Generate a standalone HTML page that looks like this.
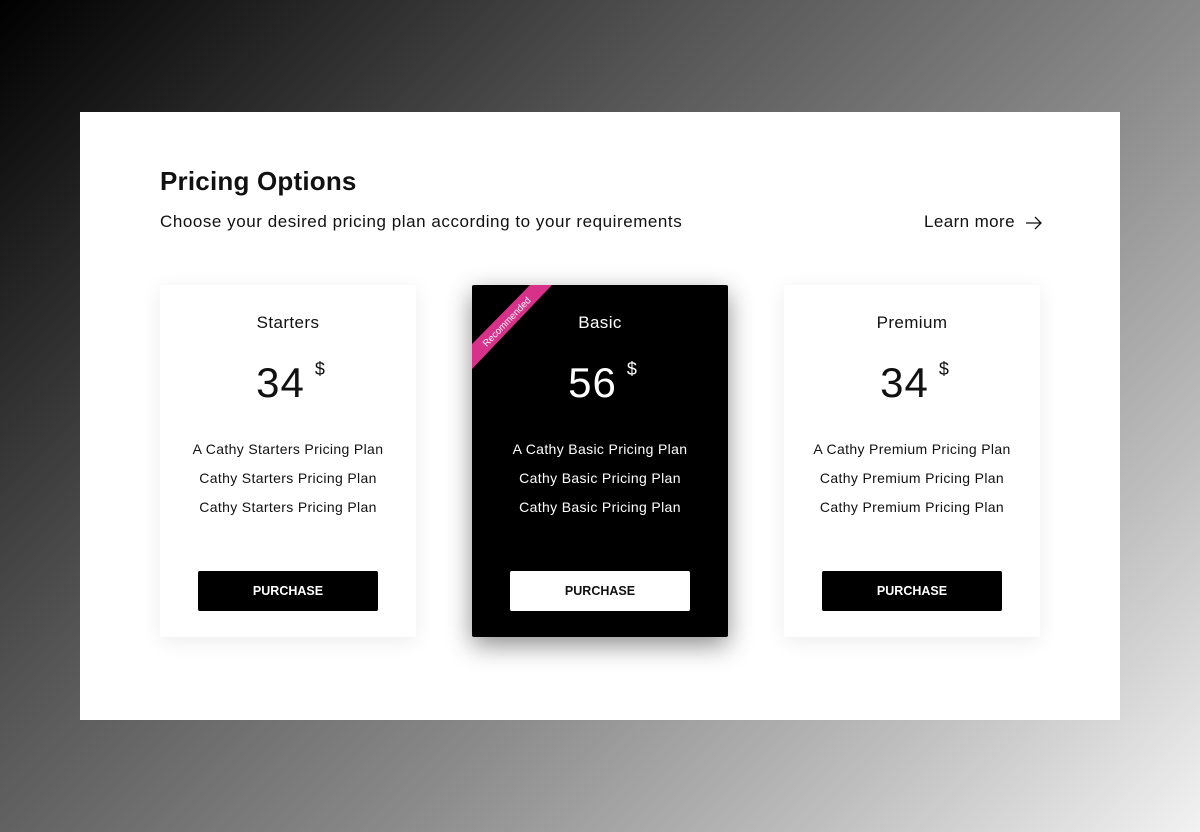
<!DOCTYPE html>
<html><head><style>
*{margin:0;padding:0;box-sizing:border-box}
body{width:1200px;height:832px;overflow:hidden;background:linear-gradient(135deg,#000 0%,#555 35%,#8a8a8a 60%,#bcbcbc 80%,#f2f2f2 100%);font-family:"Liberation Sans",sans-serif;position:relative}
.panel{position:absolute;left:80px;top:112px;width:1040px;height:608px;background:#fff}
h1{position:absolute;left:80px;top:54px;font-size:26px;font-weight:bold;color:#111;letter-spacing:0.2px}
.sub{position:absolute;left:80px;top:100px;font-size:17px;color:#111;letter-spacing:0.55px}
.learn{position:absolute;left:844px;top:100px;font-size:17px;color:#111;letter-spacing:0.4px}
.learn svg{vertical-align:-3px;margin-left:10px}
.card{position:absolute;top:173px;width:256px;height:352px;background:#fff;box-shadow:0 4px 20px rgba(0,0,0,0.08);text-align:center;color:#111;overflow:hidden;border-radius:2px}
.card.dark{background:#000;color:#fff;box-shadow:0 8px 25px rgba(0,0,0,0.45)}
.t{position:absolute;top:28px;width:100%;font-size:17px;letter-spacing:0.4px}
.p{position:absolute;top:74px;width:100%;font-size:42px;padding-left:6px;letter-spacing:1px}
.p sup{font-size:18px;position:relative;top:0px;margin-left:10px;vertical-align:top}
.f{position:absolute;top:150px;width:100%;font-size:14px;line-height:29px;letter-spacing:0.35px}
.b{position:absolute;left:38px;top:286px;width:180px;height:40px;background:#000;color:#fff;font-size:12.5px;font-weight:bold;line-height:40px;border-radius:2px}
.dark .b{background:#fff;color:#111}
.rib{position:absolute;left:0;top:0}
</style></head><body>
<div class="panel">
<h1>Pricing Options</h1>
<div class="sub">Choose your desired pricing plan according to your requirements</div>
<div class="learn">Learn more<svg width="18" height="14" viewBox="0 0 18 14"><path d="M1 7H16M10 1L16 7L10 13" fill="none" stroke="#111" stroke-width="1.3"/></svg></div>
<div class="card" style="left:80px"><div class="t">Starters</div><div class="p">34<sup>$</sup></div><div class="f">A Cathy Starters Pricing Plan<br>Cathy Starters Pricing Plan<br>Cathy Starters Pricing Plan</div><div class="b">PURCHASE</div></div>
<div class="card dark" style="left:392px"><svg class="rib" width="90" height="90"><polygon points="58,0 80,0 0,84 0,59" fill="#d8318a"/><text x="0" y="0" transform="translate(37,39) rotate(-46)" fill="#fff" font-size="9.5" text-anchor="middle" font-family="Liberation Sans">Recommended</text></svg><div class="t">Basic</div><div class="p">56<sup>$</sup></div><div class="f">A Cathy Basic Pricing Plan<br>Cathy Basic Pricing Plan<br>Cathy Basic Pricing Plan</div><div class="b">PURCHASE</div></div>
<div class="card" style="left:704px"><div class="t">Premium</div><div class="p">34<sup>$</sup></div><div class="f">A Cathy Premium Pricing Plan<br>Cathy Premium Pricing Plan<br>Cathy Premium Pricing Plan</div><div class="b">PURCHASE</div></div>
</div>
</body></html>
